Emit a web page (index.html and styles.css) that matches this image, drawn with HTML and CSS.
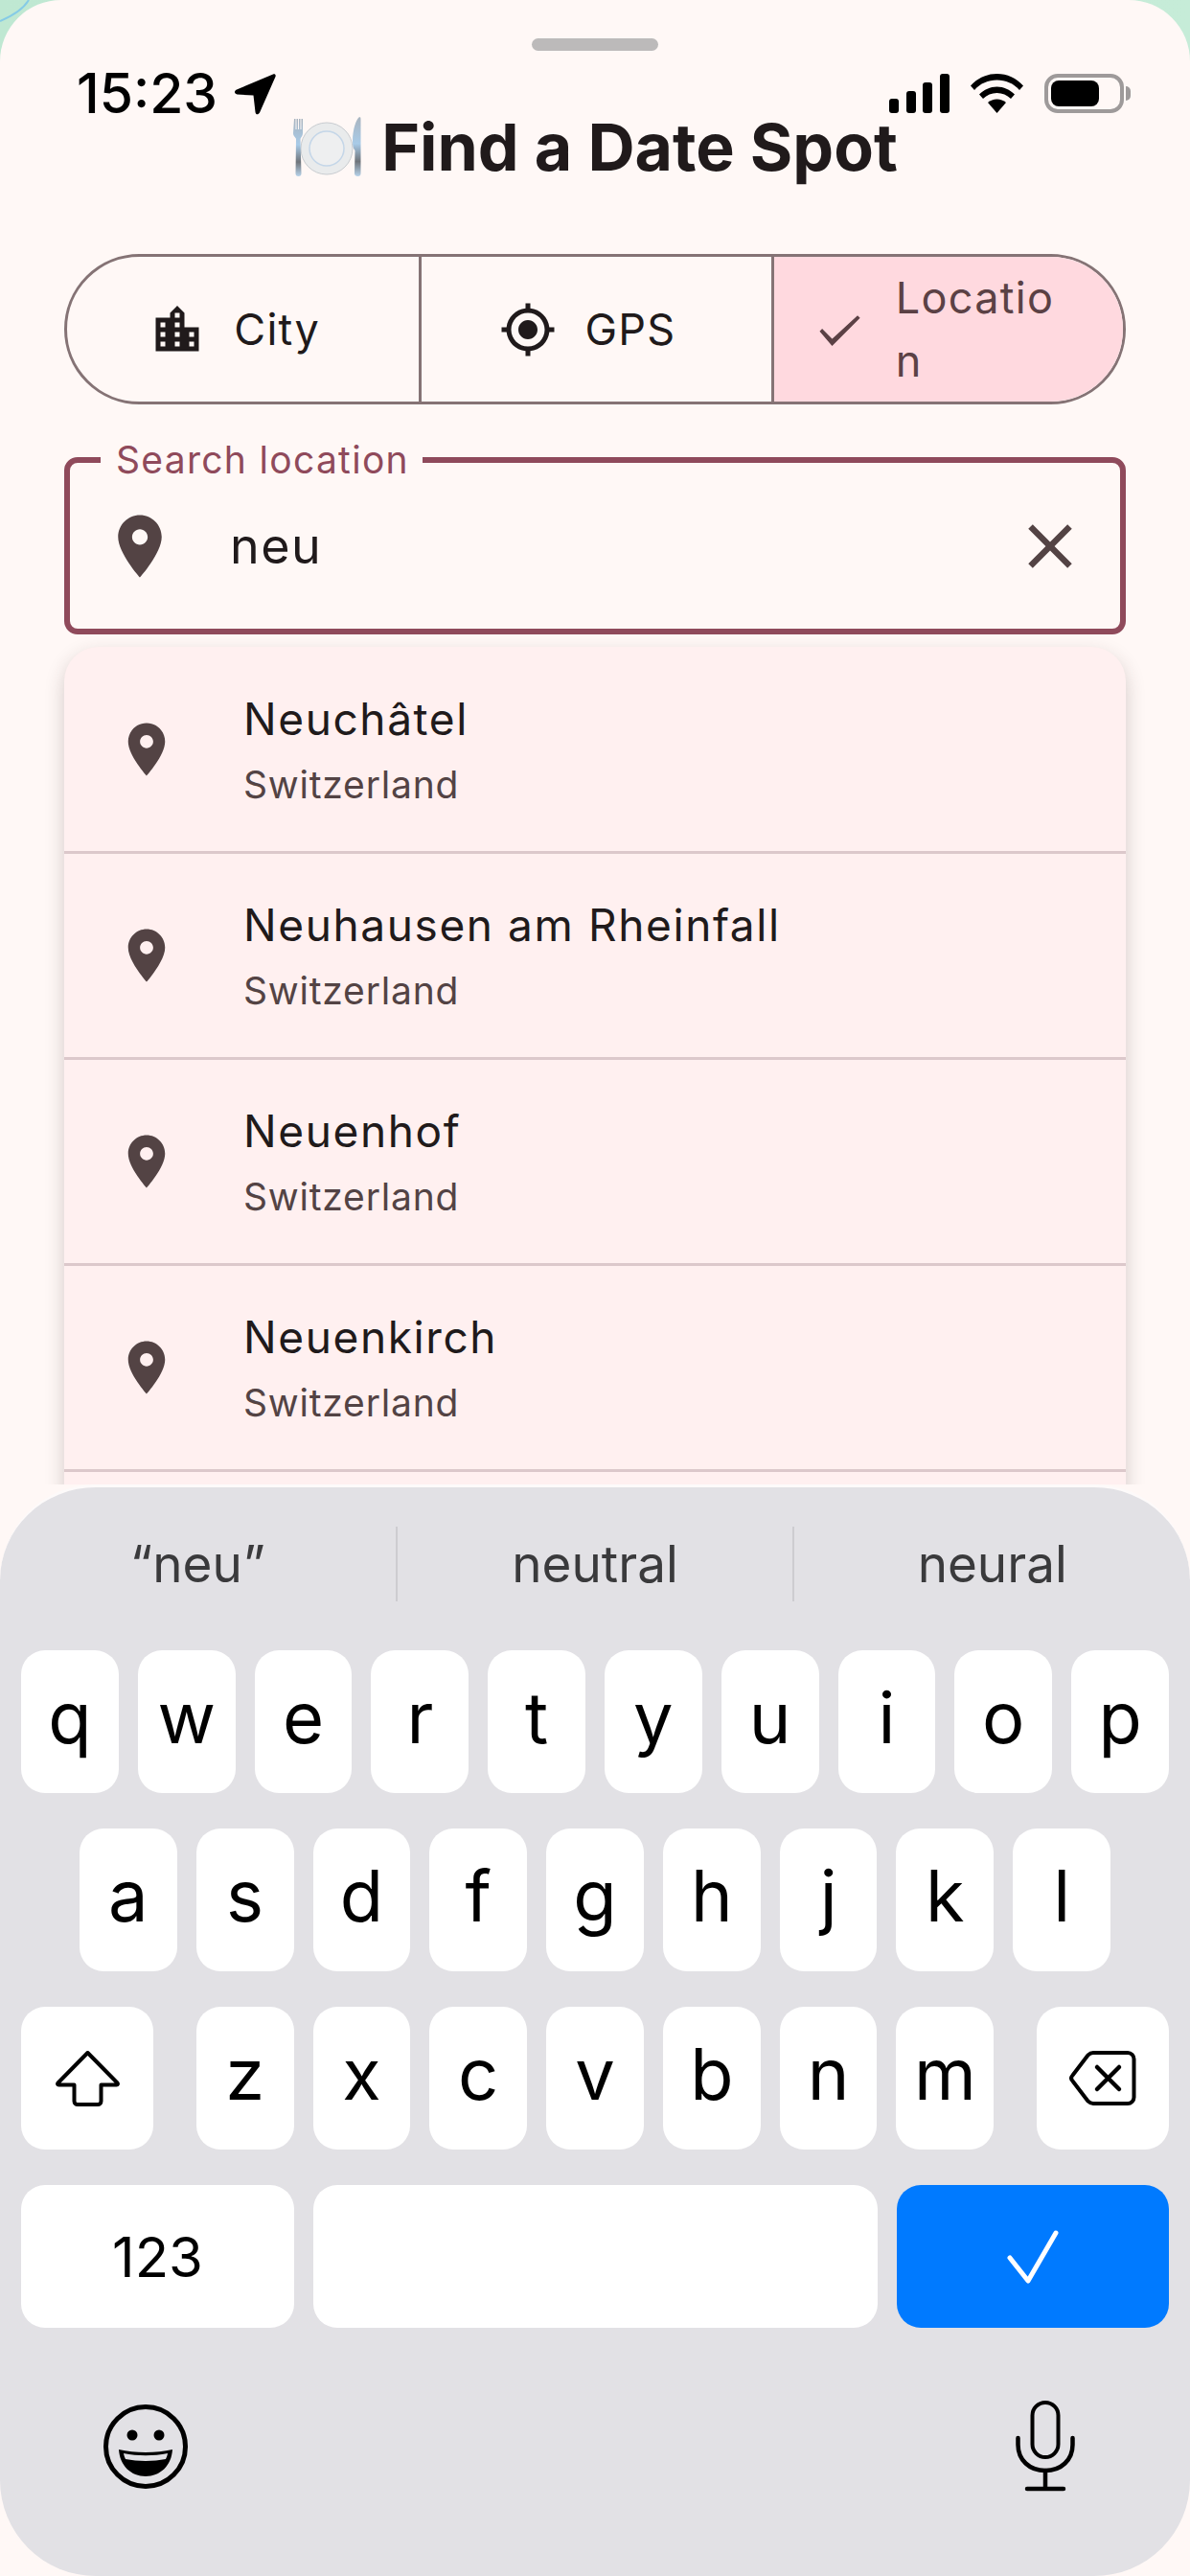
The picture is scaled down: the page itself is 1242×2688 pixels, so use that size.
FILE: index.html
```html
<!DOCTYPE html>
<html lang="en">
<head>
    <meta charset="UTF-8">
    <meta name="viewport" content="width=device-width, initial-scale=1.0">
    <title>Find a Date Spot</title>
    <link rel="stylesheet" href="styles.css">
</head>
<body>
    <!-- Bit of the map that shows behind the sheet -->
    <svg class="map-line" width="40" height="30" viewBox="0 0 40 30"><path d="M0 22C12 17 24 10 30 0" fill="none" stroke="#86cbe6" stroke-width="2"/></svg>

    <div class="sheet">
        <div class="handle"></div>

        <h1 class="title">
            <svg class="plate" width="72" height="64" viewBox="0 0 72 64">
                <defs>
                    <linearGradient id="metal" x1="0" y1="0" x2="0" y2="1">
                        <stop offset="0" stop-color="#a9b4bf"/>
                        <stop offset="0.45" stop-color="#a8cbe8"/>
                        <stop offset="0.75" stop-color="#70757b"/>
                        <stop offset="1" stop-color="#b7d3ea"/>
                    </linearGradient>
                </defs>
                <circle cx="36" cy="34" r="27" fill="#e9ebec" stroke="#c8ccd0"/>
                <circle cx="36" cy="34" r="18" fill="#eeeff0" stroke="#c4d6e8" stroke-width="1.5"/>
                <path d="M2 3h1.500v11h1V3h1.500v11h1V3H8.500v11h1V3H11v15c0 3-2 4-2.500 6L9.500 60c0 2-1 3-3 3s-3-1-3-3L4 24c-.5-2-3-3-3-6z" fill="url(#metal)"/>
                <path d="M70 1c1.500 0 1.500 1 1.500 3v56c0 2-1 3-3 3s-3.500-1-3.500-3l.5-24c-2-2-2.500-5-2.500-10 0-12 4-24 7.500-25z" fill="url(#metal)"/>
            </svg>
            <span>Find a Date Spot</span>
        </h1>

        <div class="segments">
            <div class="segment">
                <svg class="seg-icon" viewBox="0 0 24 24"><path d="M15 11V5l-3-3-3 3v2H3v14h18V11h-6zm-8 8H5v-2h2v2zm0-4H5v-2h2v2zm0-4H5V9h2v2zm6 8h-2v-2h2v2zm0-4h-2v-2h2v2zm0-4h-2V9h2v2zm0-4h-2V5h2v2zm6 12h-2v-2h2v2zm0-4h-2v-2h2v2z"/></svg>
                <span class="seg-label">City</span>
            </div>
            <div class="segment">
                <svg class="seg-icon" viewBox="0 0 24 24"><path d="M12 8c-2.210 0-4 1.790-4 4s1.790 4 4 4 4-1.790 4-4-1.790-4-4-4zm8.940 3c-.46-4.170-3.770-7.480-7.940-7.940V1h-2v2.060C6.830 3.520 3.520 6.830 3.060 11H1v2h2.060c.46 4.170 3.770 7.480 7.940 7.940V23h2v-2.060c4.170-.46 7.480-3.770 7.940-7.940H23v-2h-2.060zM12 19c-3.870 0-7-3.130-7-7s3.130-7 7-7 7 3.130 7 7-3.130 7-7 7z"/></svg>
                <span class="seg-label">GPS</span>
            </div>
            <div class="segment segment-active">
                <svg class="seg-icon" viewBox="0 0 24 24"><path d="M9 16.170L4.830 12l-.7.7L9 18.400 20.300 7.100l-.7-.7z" stroke="currentColor" stroke-width=".5"/></svg>
                <span class="seg-label seg-label-wrap">Location</span>
            </div>
        </div>

        <div class="field">
            <span class="field-label">Search location</span>
            <svg class="field-icon" viewBox="0 0 24 24"><path d="M12 2C8.130 2 5 5.130 5 9c0 5.250 7 13 7 13s7-7.750 7-13c0-3.870-3.130-7-7-7zm0 9.500c-1.380 0-2.500-1.120-2.500-2.500s1.120-2.500 2.500-2.500 2.500 1.120 2.500 2.500-1.120 2.500-2.500 2.500z"/></svg>
            <span class="field-value">neu</span>
            <svg class="field-icon" viewBox="0 0 24 24"><path d="M19 6.410L17.590 5 12 10.590 6.410 5 5 6.410 10.590 12 5 17.590 6.410 19 12 13.410 17.590 19 19 17.590 13.410 12z"/></svg>
        </div>

        <div class="results">
            <div class="result">
                <svg class="result-icon" viewBox="0 0 24 24"><path d="M12 2C8.130 2 5 5.130 5 9c0 5.250 7 13 7 13s7-7.750 7-13c0-3.870-3.130-7-7-7zm0 9.500c-1.380 0-2.500-1.120-2.500-2.500s1.120-2.500 2.500-2.500 2.500 1.120 2.500 2.500-1.120 2.500-2.500 2.500z"/></svg>
                <div class="result-text"><div class="result-name">Neuchâtel</div><div class="result-country">Switzerland</div></div>
            </div>
            <div class="result">
                <svg class="result-icon" viewBox="0 0 24 24"><path d="M12 2C8.130 2 5 5.130 5 9c0 5.250 7 13 7 13s7-7.750 7-13c0-3.870-3.130-7-7-7zm0 9.500c-1.380 0-2.500-1.120-2.500-2.500s1.120-2.500 2.500-2.500 2.500 1.120 2.500 2.500-1.120 2.500-2.500 2.500z"/></svg>
                <div class="result-text"><div class="result-name">Neuhausen am Rheinfall</div><div class="result-country">Switzerland</div></div>
            </div>
            <div class="result">
                <svg class="result-icon" viewBox="0 0 24 24"><path d="M12 2C8.130 2 5 5.130 5 9c0 5.250 7 13 7 13s7-7.750 7-13c0-3.870-3.130-7-7-7zm0 9.500c-1.380 0-2.500-1.120-2.500-2.500s1.120-2.500 2.500-2.500 2.500 1.120 2.500 2.500-1.120 2.500-2.500 2.500z"/></svg>
                <div class="result-text"><div class="result-name">Neuenhof</div><div class="result-country">Switzerland</div></div>
            </div>
            <div class="result">
                <svg class="result-icon" viewBox="0 0 24 24"><path d="M12 2C8.130 2 5 5.130 5 9c0 5.250 7 13 7 13s7-7.750 7-13c0-3.870-3.130-7-7-7zm0 9.500c-1.380 0-2.500-1.120-2.500-2.500s1.120-2.500 2.500-2.500 2.500 1.120 2.500 2.500-1.120 2.500-2.500 2.500z"/></svg>
                <div class="result-text"><div class="result-name">Neuenkirch</div><div class="result-country">Switzerland</div></div>
            </div>
        </div>
    </div>

    <!-- Status bar sits over the sheet -->
    <div class="status-bar">
        <div class="status-left">
            <span class="time">15:23</span>
            <svg width="44" height="44" viewBox="0 0 44 44"><path d="M41 1.500 3 17.500c-3 1.500-2.500 4.500.5 5l17 1 2 17.500c.5 3 3 3 4.500.5L43.500 4c.7-2-.7-3.200-2.500-2.500z"/></svg>
        </div>
        <div class="status-right">
            <svg width="63" height="41" viewBox="0 0 63 41">
                <rect x="0" y="26" width="10" height="15" rx="3"/>
                <rect x="18" y="18" width="10" height="23" rx="3"/>
                <rect x="35" y="9" width="10" height="32" rx="3"/>
                <rect x="53" y="0" width="10" height="41" rx="3"/>
            </svg>
            <svg width="55" height="41" viewBox="0 0 55 41">
                <path d="M0 12.500C7 4.500 17 0 27.500 0S48 4.500 55 12.500l-4 4.500C45 10 36.500 6.500 27.500 6.500S10 10 4 17z"/>
                <path d="M9 21.500C14 16.500 20.500 13.500 27.500 13.500s13.500 3 18.500 8l-4 4.500c-4-3.700-9-6-14.500-6S17 22.300 13 26z"/>
                <path d="M18 30c2.500-2.200 6-3.500 9.500-3.500s7 1.300 9.500 3.500L27.500 41z"/>
            </svg>
            <div class="battery"><div class="battery-fill"></div></div>
        </div>
    </div>

    <div class="keyboard-wrap">
        <div class="keyboard">
            <div class="suggestions">
                <div class="suggestion">“neu”</div>
                <div class="suggestion">neutral</div>
                <div class="suggestion">neural</div>
            </div>

            <div class="key-rows">
                <div class="key-row">
                    <div class="key">q</div><div class="key">w</div><div class="key">e</div><div class="key">r</div><div class="key">t</div><div class="key">y</div><div class="key">u</div><div class="key">i</div><div class="key">o</div><div class="key">p</div>
                </div>
                <div class="key-row">
                    <div class="key">a</div><div class="key">s</div><div class="key">d</div><div class="key">f</div><div class="key">g</div><div class="key">h</div><div class="key">j</div><div class="key">k</div><div class="key">l</div>
                </div>
                <div class="key-row key-row-split">
                    <div class="key key-side">
                        <svg width="67" height="58" viewBox="0 0 67 58"><path d="M33.500 2 2.500 33.500c-.8 1-.3 2 .8 2H19.500v17c0 2 1.500 3.500 3.500 3.500h21c2 0 3.500-1.500 3.500-3.500v-17h16.200c1.100 0 1.600-1 .8-2z" fill="none" stroke="#000" stroke-width="4" stroke-linejoin="round"/></svg>
                    </div>
                    <div class="key-group">
                        <div class="key">z</div><div class="key">x</div><div class="key">c</div><div class="key">v</div><div class="key">b</div><div class="key">n</div><div class="key">m</div>
                    </div>
                    <div class="key key-side">
                        <svg width="70" height="57" viewBox="0 0 70 57"><path d="M25 2h36c3.500 0 6.500 3 6.500 6.500v40c0 3.500-3 6.500-6.500 6.500H25c-2 0-4-1-5.300-2.300L3.500 31.500c-1.700-1.800-1.700-4.200 0-6L19.700 4.300C21 3 23 2 25 2z" fill="none" stroke="#000" stroke-width="4" stroke-linejoin="round"/><path d="M29 17l23 23M52 17 29 40" fill="none" stroke="#000" stroke-width="4.500" stroke-linecap="round"/></svg>
                    </div>
                </div>
                <div class="key-row">
                    <div class="key key-num">123</div>
                    <div class="key key-space"></div>
                    <div class="key key-done">
                        <svg width="54" height="56" viewBox="0 0 54 56"><path d="M3 29 22 53 51 3" fill="none" stroke="#fff" stroke-width="5" stroke-linecap="round" stroke-linejoin="round"/></svg>
                    </div>
                </div>
            </div>

            <div class="key-footer">
                <svg width="90" height="90" viewBox="0 0 90 90">
                    <circle cx="45" cy="45" r="41.500" fill="none" stroke="#000" stroke-width="5"/>
                    <circle cx="31" cy="33" r="5.500"/>
                    <circle cx="59" cy="33" r="5.500"/>
                    <path d="M17 48c17 4 39 4 56 0-1 17-13 28-28 28S18 65 17 48z"/>
                    <path d="M22 52c15 3 31 3 46 0-.5 2.500-1 4-2 6-13 2.500-29 2.500-42 0-1-2-1.500-3.500-2-6z" fill="#e2e1e5"/>
                </svg>
                <svg width="62" height="96" viewBox="0 0 62 96">
                    <rect x="17.500" y="2" width="27" height="57" rx="13.500" fill="none" stroke="#000" stroke-width="4"/>
                    <path d="M2.500 39v7c0 16 12 27 28.500 27s28.500-11 28.500-27v-7" fill="none" stroke="#000" stroke-width="4.500" stroke-linecap="round"/>
                    <path d="M31 73v19M12 92h38" fill="none" stroke="#000" stroke-width="4.500" stroke-linecap="round"/>
                </svg>
            </div>
        </div>
    </div>
</body>
</html>
```

FILE: styles.css
```css
/* General reset */
* {
    margin: 0;
    padding: 0;
    box-sizing: border-box;
}

body {
    position: relative;
    width: 1242px;
    height: 2688px;
    overflow: hidden;
    font-family: 'Inter', 'Noto Sans', sans-serif;
    background: linear-gradient(90deg, #bfe8d2, #c6ecd8);
    color: #201a1b;
}

.map-line {
    position: absolute;
    top: 0;
    left: 0;
}

/* Sheet */
.sheet {
    position: relative;
    height: 2688px;
    padding: 40px 67px 0;
    background-color: #fff8f6;
    border-radius: 64px 64px 0 0;
}

.handle {
    width: 132px;
    height: 13px;
    margin: 0 auto;
    background-color: #bcbaba;
    border-radius: 7px;
}

.title {
    display: flex;
    justify-content: center;
    align-items: center;
    gap: 21px;
    height: 64px;
    margin-top: 68px;
    font-size: 68px;
    font-weight: 700;
    white-space: nowrap;
}

/* Segmented control */
.segments {
    display: grid;
    grid-template-columns: repeat(3, 1fr);
    height: 157px;
    margin-top: 80px;
    border: 3px solid #857375;
    border-radius: 79px;
    overflow: hidden;
}

.segment {
    min-width: 0;
    display: flex;
    justify-content: center;
    align-items: center;
    gap: 29px;
    padding-right: 18px;
    border-left: 3px solid #857375;
}

.segment:first-child {
    border-left: none;
}

.segment-active {
    justify-content: flex-start;
    padding: 0 0 0 38px;
    background-color: #ffd9df;
    color: #5b4145;
}

.seg-icon {
    width: 60px;
    height: 60px;
    fill: currentColor;
    flex: none;
}

.seg-label {
    font-size: 45px;
    letter-spacing: 1.300px;
}

.seg-label-wrap {
    width: 175px;
    line-height: 66px;
    word-break: break-all;
}

/* Search field */
.field {
    position: relative;
    display: flex;
    align-items: center;
    height: 185px;
    margin-top: 55px;
    padding: 0 34px;
    border: 6px solid #8f4a5b;
    border-radius: 14px;
}

.field-label {
    position: absolute;
    top: -25px;
    left: 32px;
    padding: 0 14px 0 16px;
    background-color: #fff8f6;
    color: #8f4a5b;
    font-size: 39px;
    line-height: 44px;
    letter-spacing: 1.300px;
}

.field-icon {
    width: 78px;
    height: 78px;
    fill: #534344;
    flex: none;
}

.field-value {
    flex: 1;
    margin-left: 55px;
    font-size: 52px;
    letter-spacing: 1.500px;
    color: #201a1b;
}

/* Results */
.results {
    height: 900px;
    margin-top: 13px;
    padding-top: 1px;
    background-color: #fff0f0;
    border-radius: 36px 36px 0 0;
    box-shadow: 0 8px 20px rgba(60, 40, 40, 0.22);
}

.result {
    display: flex;
    align-items: center;
    gap: 68px;
    height: 215px;
    padding-left: 53px;
    border-bottom: 3px solid #dcc8cb;
}

.result-icon {
    width: 66px;
    height: 66px;
    fill: #534344;
    flex: none;
}

.result-text {
    display: flex;
    flex-direction: column;
    gap: 21px;
}

.result-name {
    font-size: 46px;
    line-height: 52px;
    letter-spacing: 1.600px;
}

.result-country {
    font-size: 39px;
    line-height: 44px;
    letter-spacing: 0.800px;
    color: #534344;
}

/* Status bar */
.status-bar {
    position: absolute;
    top: 76px;
    left: 0;
    width: 1242px;
    display: flex;
    justify-content: space-between;
    align-items: flex-start;
    padding: 0 62px 0 80px;
}

.status-left {
    display: flex;
    align-items: center;
    gap: 17px;
    height: 44px;
}

.time {
    font-size: 57px;
    font-weight: 500;
    line-height: 44px;
    color: #000;
}

.status-right {
    display: flex;
    gap: 22px;
    padding-top: 1px;
}

.battery {
    position: relative;
    width: 83px;
    height: 41px;
    padding: 3px;
    margin-right: 7px;
    border: 4px solid #9e9a9a;
    border-radius: 14px;
}

.battery-fill {
    width: 50px;
    height: 100%;
    background-color: #000;
    border-radius: 8px;
}

.battery::after {
    content: '';
    position: absolute;
    top: 9px;
    right: -11px;
    width: 5px;
    height: 15px;
    background-color: #9e9a9a;
    border-radius: 0 8px 8px 0;
}

/* Keyboard */
.keyboard-wrap {
    position: absolute;
    top: 1549px;
    left: 0;
    width: 1242px;
    height: 1139px;
    background-color: #fff8f6;
}

.keyboard {
    height: 100%;
    background-color: #e2e1e5;
    border-top: 3px solid #fdfafa;
    border-radius: 100px;
}

.suggestions {
    display: flex;
    margin-top: 41px;
    height: 78px;
}

.suggestion {
    flex: 1;
    display: flex;
    justify-content: center;
    align-items: center;
    font-size: 53px;
    color: #3a3a3c;
    border-left: 2px solid #cdccd0;
}

.suggestion:first-child {
    border-left: none;
}

.key-rows {
    display: flex;
    flex-direction: column;
    gap: 37px;
    margin-top: 51px;
    padding: 0 22px;
}

.key-row {
    display: flex;
    justify-content: center;
    gap: 20px;
}

.key-row-split {
    justify-content: space-between;
    gap: 0;
}

.key-group {
    display: flex;
    gap: 20px;
}

.key {
    display: flex;
    justify-content: center;
    align-items: center;
    width: 101.800px;
    height: 149px;
    padding-bottom: 10px;
    background-color: #fff;
    border-radius: 25px;
    font-size: 74px;
    color: #000;
}

.key-side {
    width: 138px;
    padding-bottom: 0;
}

.key-num {
    width: 285px;
    font-size: 58px;
    padding-bottom: 0;
}

.key-space {
    flex: 1;
}

.key-done {
    width: 284px;
    padding-bottom: 0;
    background-color: #007aff;
}

.key-footer {
    display: flex;
    justify-content: space-between;
    align-items: center;
    margin-top: 76px;
    padding: 0 120px 0 107px;
}
```
